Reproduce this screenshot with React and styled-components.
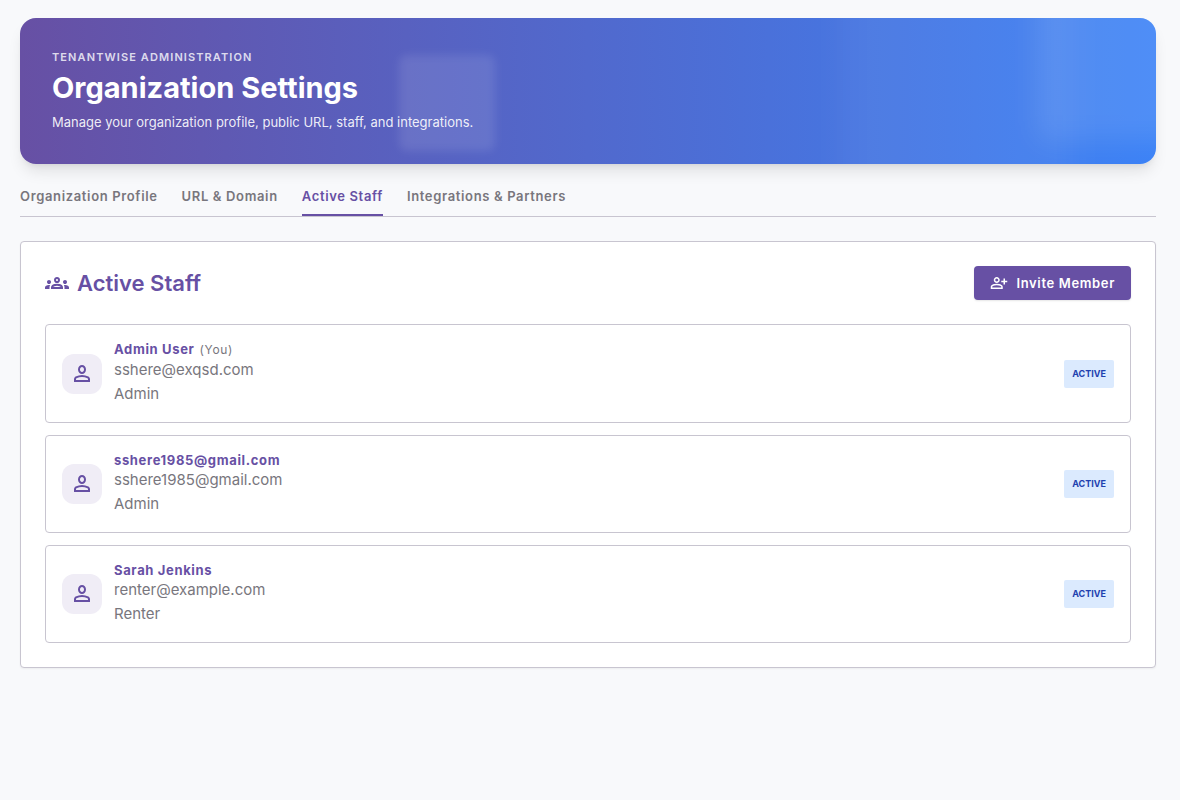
import React, { useState } from 'react'
import styled, { createGlobalStyle } from 'styled-components'

const tabs = ['Organization Profile', 'URL & Domain', 'Active Staff', 'Integrations & Partners']

const staff = [
  { name: 'Admin User', email: 'sshere@exqsd.com', role: 'Admin', you: true },
  { name: 'sshere1985@gmail.com', email: 'sshere1985@gmail.com', role: 'Admin' },
  { name: 'Sarah Jenkins', email: 'renter@example.com', role: 'Renter' },
]

const PersonIcon = () => (
  <Icon viewBox="0 -960 960 960" $size={24} aria-hidden="true">
    <path d="M480-480q-66 0-113-53t-47-127q0-74 47-127t113-53q66 0 113 53t47 127q0 74-47 127t-113 53ZM160-160v-112q0-34 17.5-62.5T224-378q62-31 126-46.5T480-440q66 0 130 15.5T736-378q29 15 46.5 43.5T800-272v112H160Zm80-80h480v-32q0-11-5.5-20T700-306q-54-27-109-40.5T480-360q-56 0-111 13.5T260-306q-9 5-14.5 14t-5.5 20v32Zm240-320q33 0 56.5-29.5T560-660q0-41-23.5-70.5T480-760q-33 0-56.5 29.5T400-660q0 41 23.5 70.5T480-560Z" />
  </Icon>
)

const PersonAddIcon = () => (
  <Icon viewBox="0 -960 960 960" $size={18} aria-hidden="true">
    <path d="M720-400v-120H600v-80h120v-120h80v120h120v80H800v120h-80Zm-360-80q-66 0-113-47t-47-113q0-66 47-113t113-47q66 0 113 47t47 113q0 66-47 113t-113 47ZM40-160v-112q0-34 17.5-62.5T104-378q62-31 126-46.5T360-440q66 0 130 15.5T616-378q29 15 46.5 43.5T680-272v112H40Zm80-80h480v-32q0-11-5.5-20T580-306q-54-27-109-40.5T360-360q-56 0-111 13.5T140-306q-9 5-14.5 14t-5.5 20v32Zm240-320q33 0 56.5-23.5T440-640q0-33-23.5-56.5T360-720q-33 0-56.5 23.5T280-640q0 33 23.5 56.5T360-560Z" />
  </Icon>
)

const GroupsIcon = () => (
  <Icon viewBox="0 -960 960 960" $size={24} aria-hidden="true">
    <path d="M0-240v-63q0-43 44-70t116-27q13 0 25 .5t23 2.5q-14 21-21 44t-7 48v65H0Zm240 0v-65q0-32 17.5-58.5T307-410q32-20 76.5-30t96.5-10q53 0 97.5 10t76.5 30q32 20 49 46.5t17 58.5v65H240Zm540 0v-65q0-26-6.5-49T754-397q11-2 22.5-2.5t23.5-.5q72 0 116 26.5t44 70.5v63H780Zm-455-80h311q-10-20-55.5-35T480-370q-55 0-100.5 15T325-320ZM160-440q-33 0-56.5-23.5T80-520q0-34 23.5-57t56.5-23q34 0 57 23t23 57q0 33-23 56.5T160-440Zm640 0q-33 0-56.5-23.5T720-520q0-34 23.5-57t56.5-23q34 0 57 23t23 57q0 33-23 56.5T800-440Zm-320-40q-50 0-85-35t-35-85q0-51 35-85.5t85-34.5q51 0 85.5 34.5T600-600q0 50-34.5 85T480-480Zm0-80q17 0 28.5-11.5T520-600q0-17-11.5-28.5T480-640q-17 0-28.5 11.5T440-600q0 17 11.5 28.5T480-560Z" />
  </Icon>
)

const App = () => {
  const [active, setActive] = useState('Active Staff')

  return (
    <>
      <GlobalStyle />
      <Page>
        <Banner>
          <GlowWide />
          <GlowCorner />
          <GlowSquare />
          <Eyebrow>TENANTWISE ADMINISTRATION</Eyebrow>
          <BannerTitle>Organization Settings</BannerTitle>
          <BannerText>Manage your organization profile, public URL, staff, and integrations.</BannerText>
        </Banner>
        <TabList role="tablist">
          {tabs.map(tab => (
            <Tab
              key={tab}
              type="button"
              role="tab"
              aria-selected={tab === active}
              $active={tab === active}
              onClick={() => setActive(tab)}
            >
              {tab}
            </Tab>
          ))}
        </TabList>
        <Panel>
          <PanelHeader>
            <PanelTitle>
              <GroupsIcon />
              Active Staff
            </PanelTitle>
            <InviteButton type="button">
              <PersonAddIcon />
              Invite Member
            </InviteButton>
          </PanelHeader>
          <StaffList>
            {staff.map(member => (
              <StaffRow key={member.email}>
                <Avatar>
                  <PersonIcon />
                </Avatar>
                <Details>
                  <Name>
                    {member.name}
                    {member.you && <You>(You)</You>}
                  </Name>
                  <Line>{member.email}</Line>
                  <Line>{member.role}</Line>
                </Details>
                <Badge>ACTIVE</Badge>
              </StaffRow>
            ))}
          </StaffList>
        </Panel>
      </Page>
    </>
  )
}

export default App

const GlobalStyle = createGlobalStyle`
  :root {
    --primary: #6750a4;
    --muted: #78767d;
    --border: #c8c5d0;
  }

  * {
    box-sizing: border-box;
    margin: 0;
    padding: 0;
  }

  body {
    background: #f8f9fb;
    font-family: Inter, sans-serif;
  }

  button {
    border: 0;
    font-family: inherit;
    cursor: pointer;
  }
`

const Icon = styled.svg`
  width: ${({ $size }) => $size}px;
  height: ${({ $size }) => $size}px;
  flex-shrink: 0;
  fill: currentColor;
`

const Page = styled.main`
  padding: 18px 24px 24px 20px;
`

const Banner = styled.header`
  position: relative;
  overflow: hidden;
  padding: 32px;
  border-radius: 16px;
  background: linear-gradient(90deg, #6750a4, #3b82f6);
  box-shadow: 0 10px 15px -3px rgba(0, 0, 0, 0.1), 0 4px 6px -4px rgba(0, 0, 0, 0.1);
  color: #fff;
`

const Glow = styled.div`
  position: absolute;
  background: rgba(255, 255, 255, 0.1);
`

const GlowCorner = styled(Glow)`
  top: -64px;
  right: -64px;
  width: 184px;
  height: 188px;
  border-radius: 12px;
  filter: blur(14px);
`

const GlowWide = styled(Glow)`
  top: -64px;
  right: 80px;
  width: 236px;
  height: 288px;
  background: rgba(255, 255, 255, 0.05);
  filter: blur(16px);
`

const GlowSquare = styled(Glow)`
  top: 37px;
  left: 33.333%;
  width: 96px;
  height: 96px;
  border-radius: 8px;
  filter: blur(4px);
`

const Eyebrow = styled.p`
  position: relative;
  color: rgba(255, 255, 255, 0.8);
  font-size: 11px;
  font-weight: 600;
  letter-spacing: 0.1em;
  line-height: 14px;
`

const BannerTitle = styled.h1`
  position: relative;
  margin: 4px 0;
  font-size: 29px;
  font-weight: 700;
  line-height: 40px;
`

const BannerText = styled.p`
  position: relative;
  color: rgba(255, 255, 255, 0.9);
  font-size: 13px;
  line-height: 20px;
`

const TabList = styled.nav`
  display: flex;
  gap: 24px;
  margin: 22px 0 24px;
  border-bottom: 1px solid var(--border);
`

const Tab = styled.button`
  padding-bottom: 8px;
  border-bottom: 2px solid ${({ $active }) => ($active ? 'var(--primary)' : 'transparent')};
  background: none;
  color: ${({ $active }) => ($active ? 'var(--primary)' : 'var(--muted)')};
  font-size: 13px;
  font-weight: 600;
  letter-spacing: 0.05em;
  line-height: 20px;
`

const Panel = styled.section`
  padding: 24px;
  border: 1px solid var(--border);
  border-radius: 4px;
  background: #fff;
  box-shadow: 0 1px 2px rgba(0, 0, 0, 0.05);
`

const PanelHeader = styled.div`
  display: flex;
  align-items: center;
  justify-content: space-between;
  margin-bottom: 24px;
`

const PanelTitle = styled.h2`
  display: flex;
  align-items: center;
  gap: 8px;
  color: var(--primary);
  font-size: 22px;
  font-weight: 600;
  line-height: 32px;
`

const InviteButton = styled.button`
  display: flex;
  align-items: center;
  gap: 8px;
  padding: 8px 16px;
  border-radius: 4px;
  background: var(--primary);
  box-shadow: 0 1px 2px rgba(0, 0, 0, 0.1);
  color: #fff;
  font-size: 13px;
  font-weight: 600;
  letter-spacing: 0.05em;
  line-height: 18px;
`

const StaffList = styled.ul`
  display: flex;
  flex-direction: column;
  gap: 12px;
  list-style: none;
`

const StaffRow = styled.li`
  display: flex;
  align-items: center;
  gap: 12px;
  padding: 16px;
  border: 1px solid var(--border);
  border-radius: 4px;
`

const Avatar = styled.div`
  display: flex;
  align-items: center;
  justify-content: center;
  width: 40px;
  height: 40px;
  border-radius: 12px;
  background: #f0edf6;
  color: var(--primary);
`

const Details = styled.div`
  flex: 1;
  min-width: 0;
`

const Name = styled.h3`
  color: var(--primary);
  font-size: 13px;
  font-weight: 700;
  letter-spacing: 0.05em;
  line-height: 16px;
`

const You = styled.span`
  margin-left: 5px;
  color: var(--muted);
  font-size: 12px;
  font-weight: 400;
  line-height: 16px;
`

const Line = styled.p`
  color: var(--muted);
  font-size: 15px;
  line-height: 24px;
`

const Badge = styled.span`
  padding: 4px 8px;
  border-radius: 2px;
  background: #dbeafe;
  color: #1e40af;
  font-size: 9px;
  font-weight: 700;
  line-height: 20px;
`
